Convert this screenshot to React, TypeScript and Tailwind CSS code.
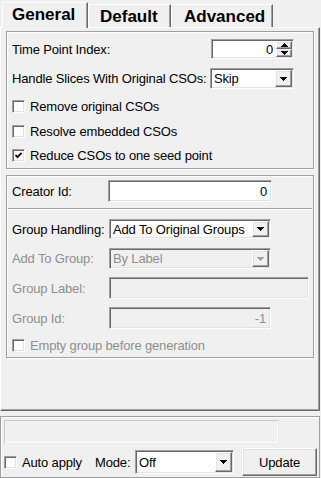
import React from "react";

const sunken =
  "border border-t-[#a0a0a0] border-l-[#a0a0a0] border-b-white border-r-white shadow-[inset_1px_1px_0_#696969,inset_-1px_-1px_0_#e3e3e3]";
const raised =
  "border border-t-white border-l-white border-b-[#696969] border-r-[#696969] shadow-[inset_-1px_-1px_0_#a0a0a0,inset_1px_1px_0_#e3e3e3]";
const etched = "border border-[#a0a0a0] shadow-[inset_1px_1px_0_#ffffff,1px_1px_0_#ffffff]";

function Tri({ color = "#000", w = 7, h = 4, up = false }: { color?: string; w?: number; h?: number; up?: boolean }) {
  return (
    <svg width={w} height={h} viewBox={`0 0 ${w} ${h}`} className="block">
      <polygon
        points={up ? `0,${h} ${w},${h} ${w / 2},0` : `0,0 ${w},0 ${w / 2},${h}`}
        fill={color}
        shapeRendering="crispEdges"
      />
    </svg>
  );
}

function Combo({
  text,
  w,
  h,
  disabled = false,
}: {
  text: string;
  w: string;
  h: string;
  disabled?: boolean;
}) {
  return (
    <div className={`${sunken} ${w} ${h} shrink-0 flex items-stretch ${disabled ? "bg-[#f0f0f0]" : "bg-white"}`}>
      <div className={`flex-1 flex items-center pl-[3px] ${disabled ? "text-[#8f8f8f]" : "text-black"}`}>{text}</div>
      <div className={`${raised} w-[17px] my-[1px] mr-[1px] bg-[#f0f0f0] flex items-center justify-center`}>
        <Tri color={disabled ? "#a0a0a0" : "#000"} />
      </div>
    </div>
  );
}

function CheckBox({ checked = false }: { checked?: boolean }) {
  return (
    <div className={`${sunken} w-[13px] h-[13px] shrink-0 bg-white flex items-center justify-center`}>
      {checked && (
        <svg width="9" height="9" viewBox="0 0 9 9" className="block">
          <path d="M1.5 4 L3.5 6.2 L7.5 1.8" stroke="#000" strokeWidth="1.8" fill="none" />
        </svg>
      )}
    </div>
  );
}

export default function App() {
  return (
    <div className="w-[321px] h-[478px] bg-[#f0f0f0] font-['Liberation_Sans',Arial,sans-serif] text-[13px] tracking-[-0.15px] text-black overflow-hidden leading-none whitespace-nowrap">
      {/* Tabs */}
      <div className="h-[27px] flex items-end pl-[2px] tracking-normal">
        <div className="relative z-10 -mb-[1px] h-[26px] w-[86px] bg-[#f0f0f0] border-l border-t border-r border-l-white border-t-white border-r-[#696969] shadow-[inset_-1px_0_0_#a0a0a0] flex items-center pl-[9px] pb-[2px] font-bold text-[17px]">
          General
        </div>
        <div className="h-[23px] w-[83px] border-l border-t border-r border-l-white border-t-white border-r-[#696969] shadow-[inset_-1px_0_0_#a0a0a0] flex items-center pl-[11px] font-bold text-[17px]">
          Default
        </div>
        <div className="h-[23px] w-[102px] border-l border-t border-r border-l-white border-t-white border-r-[#696969] shadow-[inset_-1px_0_0_#a0a0a0] flex items-center pl-[12px] font-bold text-[17px]">
          Advanced
        </div>
      </div>

      {/* Pane */}
      <div className="w-[320px] h-[384px] border border-t-white border-l-white border-r-[#696969] border-b-[#696969] shadow-[inset_-1px_-1px_0_#a0a0a0] pl-[5px] pt-[3px] flex flex-col">
        {/* Group 1 */}
        <div className={`${etched} w-[308px] h-[138px] flex flex-col pl-[5px] pr-[19px] pt-[7px]`}>
          <div className="h-[20px] flex items-center justify-between">
            <span>Time Point Index:</span>
            <div className={`${sunken} w-[83px] h-[20px] shrink-0 bg-white flex items-stretch`}>
              <div className="flex-1 flex items-center justify-end pr-[3px]">0</div>
              <div className="w-[16px] my-[1px] mr-[1px] flex flex-col">
                <div className={`${raised} flex-1 bg-[#f0f0f0] flex items-center justify-center`}>
                  <Tri up w={7} h={4} />
                </div>
                <div className={`${raised} flex-1 bg-[#f0f0f0] flex items-center justify-center`}>
                  <Tri w={7} h={4} />
                </div>
              </div>
            </div>
          </div>
          <div className="mt-[9px] h-[21px] flex items-center justify-between">
            <span>Handle Slices With Original CSOs:</span>
            <Combo text="Skip" w="w-[84px]" h="h-[21px]" />
          </div>
          <div className="mt-[5px] h-[25px] flex items-center gap-[5px]">
            <CheckBox />
            <span>Remove original CSOs</span>
          </div>
          <div className="h-[24px] flex items-center gap-[5px]">
            <CheckBox />
            <span>Resolve embedded CSOs</span>
          </div>
          <div className="h-[24px] flex items-center gap-[5px]">
            <CheckBox checked />
            <span>Reduce CSOs to one seed point</span>
          </div>
        </div>

        {/* Group 2 */}
        <div className={`${etched} mt-[6px] w-[308px] h-[183px] flex flex-col pt-[4px]`}>
          <div className="h-[22px] flex items-center pl-[5px]">
            <span className="w-[96px] shrink-0">Creator Id:</span>
            <div className={`${sunken} w-[164px] h-[22px] bg-white flex items-center justify-end pr-[4px]`}>0</div>
          </div>
          <div className="mt-[6px] mx-[1px] h-[2px] border-t border-t-[#a0a0a0] border-b border-b-white" />
          <div className="mt-[9px] h-[20px] flex items-center pl-[5px]">
            <span className="w-[97px] shrink-0">Group Handling:</span>
            <Combo text="Add To Original Groups" w="w-[162px]" h="h-[20px]" />
          </div>
          <div className="mt-[9px] h-[21px] flex items-center pl-[5px] text-[#8f8f8f]">
            <span className="w-[97px] shrink-0">Add To Group:</span>
            <Combo text="By Label" w="w-[162px]" h="h-[21px]" disabled />
          </div>
          <div className="mt-[8px] h-[22px] flex items-center pl-[5px] text-[#8f8f8f]">
            <span className="w-[97px] shrink-0">Group Label:</span>
            <div className={`${sunken} w-[200px] h-[22px] bg-[#f0f0f0]`} />
          </div>
          <div className="mt-[8px] h-[22px] flex items-center pl-[5px] text-[#8f8f8f]">
            <span className="w-[97px] shrink-0">Group Id:</span>
            <div className={`${sunken} w-[162px] h-[22px] bg-[#f0f0f0] flex items-center justify-end pr-[4px]`}>-1</div>
          </div>
          <div className="mt-[5px] h-[23px] flex items-center gap-[5px] pl-[5px] text-[#8f8f8f]">
            <CheckBox />
            <span>Empty group before generation</span>
          </div>
        </div>
      </div>

      {/* Bottom frame */}
      <div className="mt-[5px] w-[320px] h-[62px] border border-[#a0a0a0] shadow-[inset_1px_1px_0_#ffffff] pl-[3px] pt-[3px] flex flex-col">
        <div className="w-[275px] h-[24px] border border-t-[#c8c8c8] border-l-[#c8c8c8] border-r-[#e8e8e8] border-b-[#e8e8e8] shadow-[inset_-1px_-1px_0_#ffffff]" />
        <div className="mt-[4px] h-[28px] flex items-center">
          <CheckBox />
          <span className="ml-[5px] w-[73px] shrink-0">Auto apply</span>
          <span className="w-[40px] shrink-0">Mode:</span>
          <Combo text="Off" w="w-[99px]" h="h-[24px]" />
          <div className={`${raised} ml-[8px] w-[75px] h-[28px] shrink-0 bg-[#f0f0f0] flex items-center justify-center`}>Update</div>
        </div>
      </div>
    </div>
  );
}
